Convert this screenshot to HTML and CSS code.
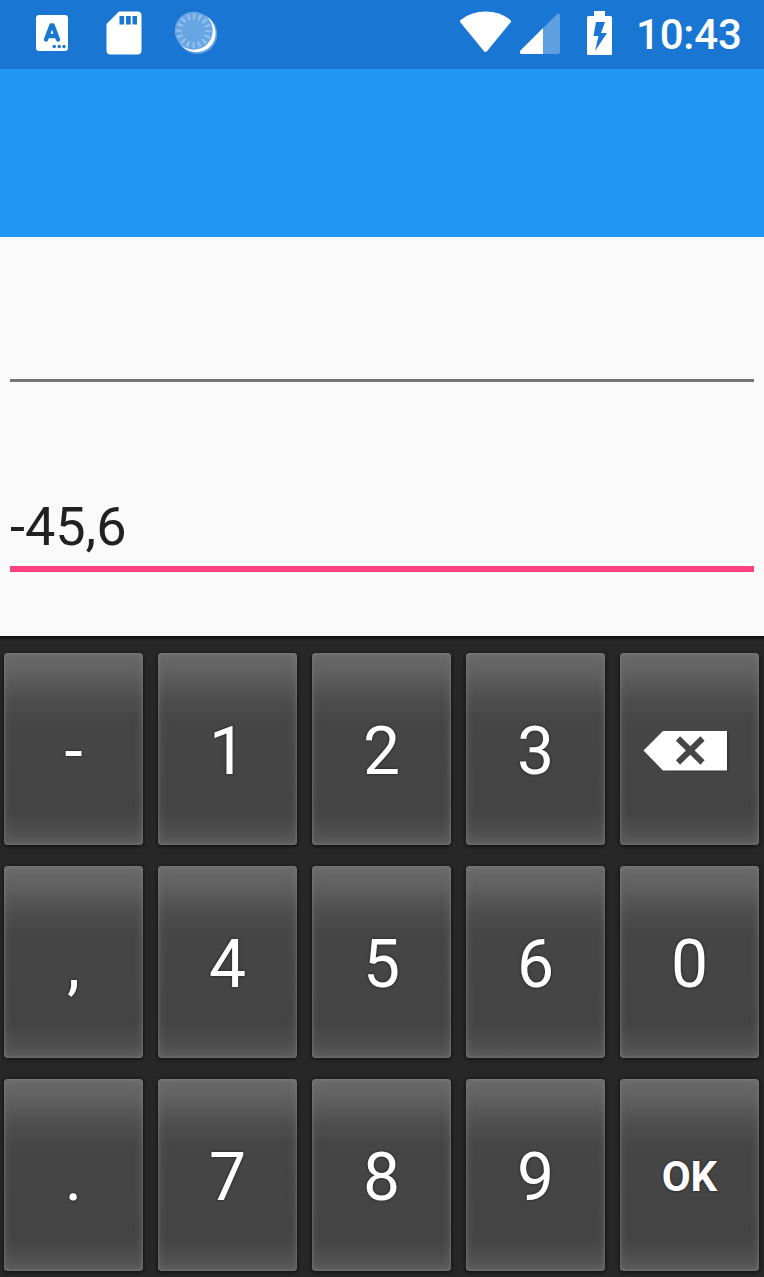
FILE: index.html
```html
<!DOCTYPE html>
<html lang="en">
<head>
<meta charset="utf-8">
<title>Numeric keyboard</title>
<link rel="stylesheet" href="styles.css">
</head>
<body>
<div class="screen">
  <header class="status-bar">
    <svg class="status-icons" width="220" height="69" viewBox="0 0 220 69">
      <rect x="36" y="15" width="32" height="36" rx="3" fill="#fff"/>
      <path d="M46 39.500L51.300 25.500H52.700L58 39.500M48 36H56" fill="none" stroke="#1976d2" stroke-width="4.300" stroke-linecap="round" stroke-linejoin="round"/>
      <g fill="#1976d2"><circle cx="54.3" cy="46.500" r="1.7"/><circle cx="59.3" cy="46.500" r="1.7"/><circle cx="64" cy="46.500" r="1.7"/></g>
      <path d="M119 11.500H137.500Q141.500 11.500 141.500 15.500V50.500Q141.500 54.500 137.500 54.500H110.500Q106.500 54.500 106.500 50.500V24Z" fill="#fff"/>
      <path d="M119.500 16h4.700v8.500h-4.700zM126 16h4.700v8.500h-4.700zM132.500 16h4.500v8.500h-4.500z" fill="#1976d2"/>
      <circle cx="197.300" cy="34" r="20" fill="#8abaf0" opacity=".6"/>
      <circle cx="196.300" cy="33" r="19.300" fill="#fff"/>
      <circle cx="193.700" cy="30.800" r="19" fill="#68a5e3"/>
      <circle cx="193.700" cy="30.800" r="14.500" fill="none" stroke="#93bfec" stroke-width="6" stroke-dasharray="2.300 3.394" stroke-dashoffset="1.150"/>
    </svg>
    <div class="status-right">
      <svg width="170" height="69" viewBox="455 0 170 69">
        <path d="M460.500 20Q471 11.500 485.500 11.500T510.500 20Q511.500 21.200 510.700 22.200L487.200 51Q485.500 53 483.800 51L460.300 22.200Q459.500 21.200 460.500 20Z" fill="#fff"/>
        <path d="M556.500 14.700Q560 12 560 16V51.500Q560 54 557.500 54H543V28Z" fill="#5e9fe0"/>
        <path d="M543 28V54H522Q518.500 54 520.500 50.500Z" fill="#fff"/>
        <path d="M594 11h11v5h5.500q1.500 0 1.500 1.500v36q0 1.500-1.500 1.500h-22q-1.500 0-1.500-1.500v-36q0-1.500 1.500-1.500h5.500z" fill="#fff"/>
        <path d="M596 22H605L601 33H607L595 51L598.500 36H593.500Z" fill="#1976d2"/>
      </svg>
      <span class="clock">10:43</span>
    </div>
  </header>
  <div class="toolbar"></div>
  <main class="form">
    <div class="field field-idle"></div>
    <div class="field field-active">-45,6</div>
  </main>
  <section class="keyboard">
    <div class="key">-</div><div class="key">1</div><div class="key">2</div><div class="key">3</div>
    <div class="key key-delete">
      <svg width="90" height="44" viewBox="0 0 90 44">
        <path d="M2 23L22 3H86V42.500H22Z" fill="#2c2c2c" opacity=".55"/>
        <path d="M0.500 21.500L20 2H84V41.500H20Z" fill="#fff"/>
        <path d="M35 9.500L59.500 33.500M59.500 9.500L35 33.500" stroke="#464646" stroke-width="6"/>
      </svg>
    </div>
    <div class="key">,</div><div class="key">4</div><div class="key">5</div><div class="key">6</div><div class="key">0</div>
    <div class="key">.</div><div class="key">7</div><div class="key">8</div><div class="key">9</div><div class="key key-ok">OK</div>
  </section>
</div>
</body>
</html>
```
FILE: styles.css
```css
* { box-sizing: border-box; }
body { margin: 0; font-family: Roboto, sans-serif; background: #fafafa; }
.screen { width: 764px; height: 1277px; display: flex; flex-direction: column; overflow: hidden; }
.status-bar { height: 69px; flex: none; background: #1976d2; display: flex; justify-content: space-between; }
.status-right { width: 309px; display: flex; }
.status-right svg { flex: none; }
.clock { color: #fff; font-size: 42px; font-weight: 500; line-height: 69px; letter-spacing: -.2px; padding-left: 11px; white-space: nowrap; }
.toolbar { height: 168px; flex: none; background: #2196f3; }
.form { height: 399px; flex: none; padding: 0 10px; background: #fafafa; }
.field-idle { height: 145px; border-bottom: 3px solid #757575; }
.field-active { height: 190px; padding-top: 112px; border-bottom: 6px solid #ff4081; color: #212121; font-size: 54px; line-height: 66px; }
.keyboard {
  height: 641px; flex: none; padding: 17px 5px 6px 4px;
  display: grid; grid-template-columns: repeat(5, 139px); grid-auto-rows: 192px; gap: 21px 15px;
  background: linear-gradient(#0c0c0c, #202020 3px, #272727 6px, #272727);
}
.key {
  display: flex; align-items: center; justify-content: center;
  padding-top: 5px; border-radius: 4px;
  font-size: 66px; line-height: 78px; color: #fff; text-shadow: 0 0 3px #181818;
  background: linear-gradient(#6a6a6a, #616161 10%, #4f4f4f 23%, #464646 34%, #444 82%, #4b4b4b 90%, #585858);
  box-shadow: 0 1px 3px 1px #151515, inset 0 0 2px 1px rgba(130, 130, 130, .45), inset 0 0 9px 1px rgba(125, 125, 125, .4);
}
.key-delete { padding: 4px 4px 0 0; }
.key-ok { font-size: 42px; font-weight: 700; padding-top: 3px; }
```
